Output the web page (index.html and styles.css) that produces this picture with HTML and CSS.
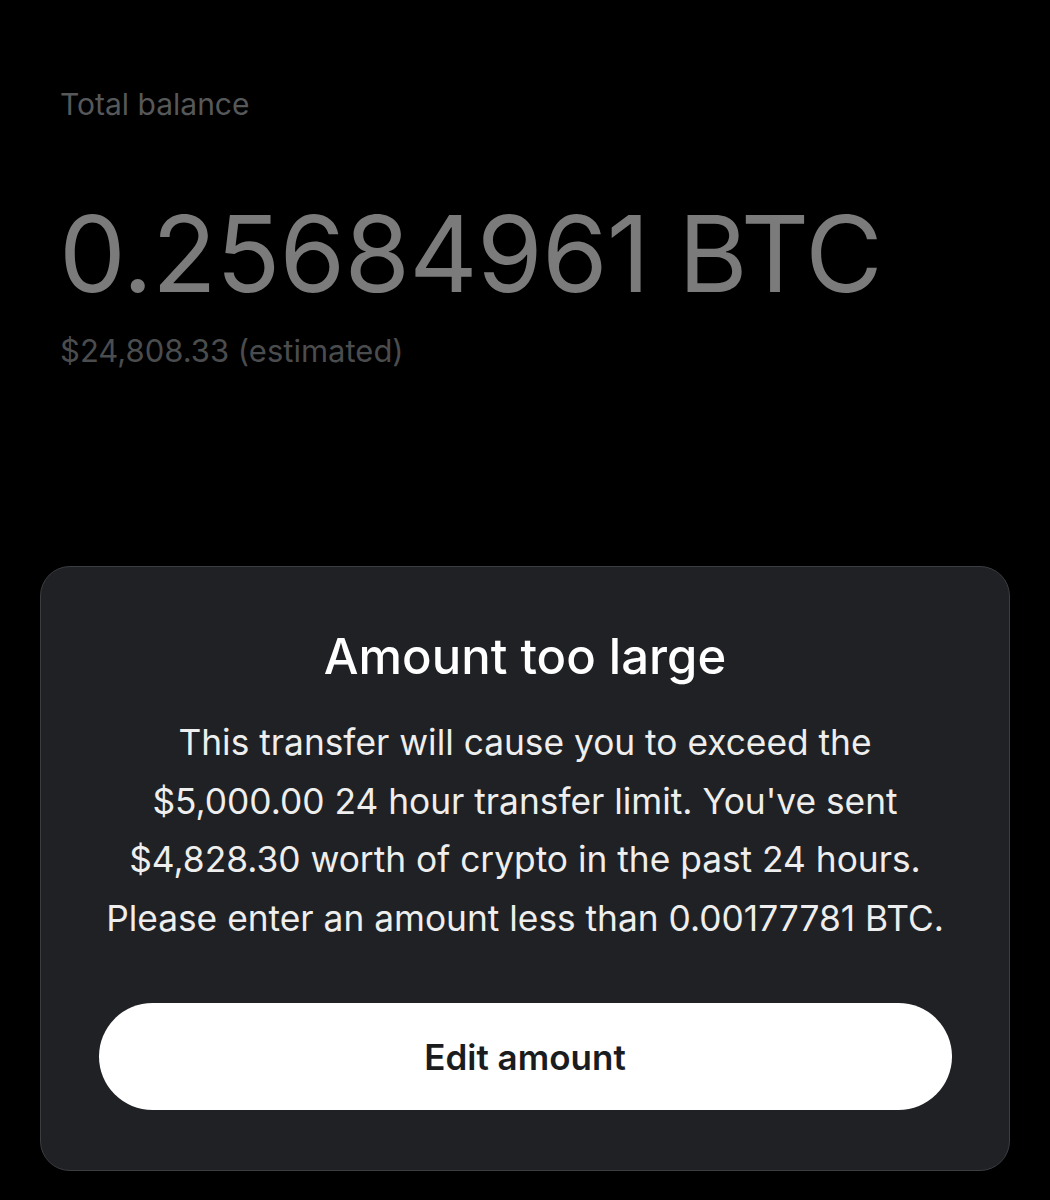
FILE: index.html
```html
<!DOCTYPE html>
<html lang="en">
<head>
<meta charset="utf-8">
<title>Amount too large</title>
<link rel="stylesheet" href="styles.css">
</head>
<body>
<main class="screen">
  <section class="balance">
    <div class="balance-label">Total balance</div>
    <div class="balance-amount">0.25684961 BTC</div>
    <div class="balance-fiat">$24,808.33 (estimated)</div>
  </section>
  <section class="sheet">
    <h2 class="sheet-title">Amount too large</h2>
    <p class="sheet-body">This transfer will cause you to exceed the<br>$5,000.00 24 hour transfer limit. You've sent<br>$4,828.30 worth of crypto in the past 24 hours.<br>Please enter an amount less than 0.00177781 BTC.</p>
    <button class="sheet-button">Edit amount</button>
  </section>
</main>
</body>
</html>
```
FILE: styles.css
```css
html, body {
  margin: 0;
  padding: 0;
  background: #000;
}
body {
  font-family: Inter, "Noto Sans", sans-serif;
  width: 1050px;
  height: 1200px;
  overflow: hidden;
}
.screen {
  display: flex;
  flex-direction: column;
}
.balance {
  padding: 85px 0 0 60px;
  display: flex;
  flex-direction: column;
  height: 566px;
  box-sizing: border-box;
}
.balance-label {
  font-size: 30px;
  line-height: 38px;
  color: #56585a;
}
.balance-amount {
  margin-top: 71px;
  font-size: 106px;
  line-height: 120px;
  color: #7b7b7b;
  letter-spacing: -0.8px;
  margin-left: -1px;
}
.balance-fiat {
  margin-top: 18px;
  font-size: 31px;
  line-height: 38px;
  color: #4a4c4e;
}
.sheet {
  margin: 0 40px;
  background: #1f2124;
  border: 1.5px solid #3a3d41;
  border-radius: 30px;
  display: flex;
  flex-direction: column;
  align-items: center;
  padding: 62px 58px 58px;
  height: 605px;
  box-sizing: border-box;
}
.sheet-title {
  margin: 0;
  font-size: 49px;
  line-height: 56px;
  font-weight: 500;
  color: #fff;
}
.sheet-body {
  margin: 29px 0 0;
  font-size: 35.3px;
  line-height: 58.5px;
  color: #eeeeee;
  text-align: center;
}
.sheet-button {
  margin-top: 55px;
  width: 853px;
  height: 107px;
  flex-shrink: 0;
  border: none;
  border-radius: 54px;
  background: #fff;
  color: #1b1c1e;
  font-family: Inter, "Noto Sans", sans-serif;
  font-size: 35px;
  font-weight: 600;
}
```
